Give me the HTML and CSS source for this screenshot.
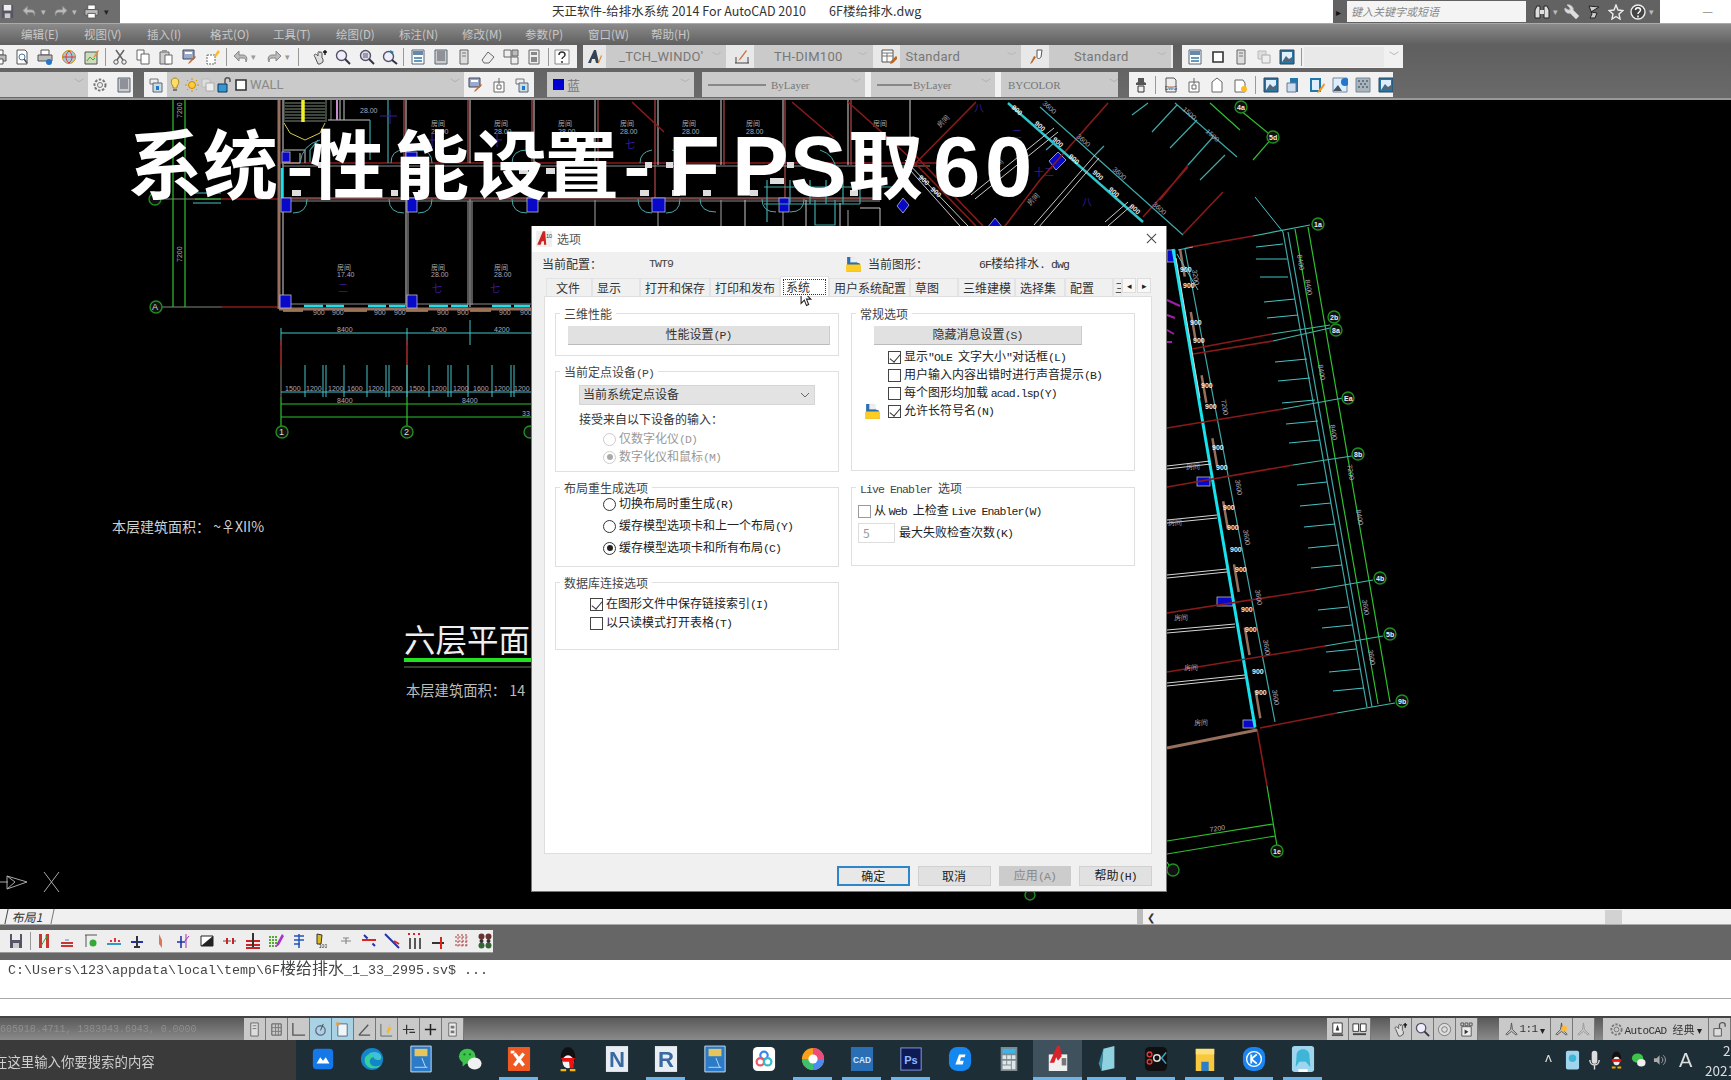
FILE: index.html
```html
<!DOCTYPE html>
<html lang="zh">
<head>
<meta charset="utf-8">
<title>天正软件-给排水系统 2014 For AutoCAD 2010</title>
<link rel="stylesheet" href="styles.css">
</head>
<body>
<svg class="defs" width="0" height="0">
  <defs>
    <symbol id="doc" viewBox="0 0 16 16"><path d="M3 1h7l3 3v11H3z" fill="#fff" stroke="#555"/><path d="M5 6h6M5 9h6M5 12h4" stroke="#88a"/></symbol>
    <symbol id="save" viewBox="0 0 16 16"><path d="M2 1h12v14H2z" fill="#556"/><path d="M4 1h8v6H4z" fill="#eee"/><path d="M5 10h6v5H5z" fill="#ccc"/></symbol>
    <symbol id="print" viewBox="0 0 16 16"><path d="M4 1h8v5H4z" fill="#fff" stroke="#555"/><path d="M1 6h14v6H1z" fill="#bbb" stroke="#555"/><path d="M4 10h8v5H4z" fill="#fff" stroke="#555"/></symbol>
    <symbol id="prev" viewBox="0 0 16 16"><path d="M3 1h8l2 2v12H3z" fill="#fff" stroke="#555"/><circle cx="8" cy="8" r="3" fill="none" stroke="#47a"/><path d="M10 10l3 4" stroke="#555" stroke-width="1.5"/></symbol>
    <symbol id="plot" viewBox="0 0 16 16"><path d="M4 1h8v5H4z" fill="#fff" stroke="#555"/><path d="M1 6h14v6H1z" fill="#bbb" stroke="#555"/><circle cx="12" cy="13" r="3" fill="#27c"/></symbol>
    <symbol id="globe" viewBox="0 0 16 16"><circle cx="8" cy="8" r="6.5" fill="#9cd" stroke="#c80"/><path d="M2 8h12M8 2c-4 3-4 9 0 12M8 2c4 3 4 9 0 12" fill="none" stroke="#e33"/></symbol>
    <symbol id="pub" viewBox="0 0 16 16"><path d="M1 3h12v12H1z" fill="#cdb" stroke="#555"/><path d="M3 12l3-4 3 3 2-2" fill="none" stroke="#3a3"/><path d="M14 1l-4 6-1 2 2-1 4-6z" fill="#e83"/></symbol>
    <symbol id="cut" viewBox="0 0 16 16"><path d="M4 1l7 10M12 1L5 11" stroke="#666" stroke-width="1.5"/><circle cx="4" cy="13" r="2.2" fill="none" stroke="#555"/><circle cx="12" cy="13" r="2.2" fill="none" stroke="#555"/></symbol>
    <symbol id="copy" viewBox="0 0 16 16"><path d="M2 1h7v10H2z" fill="#fff" stroke="#666"/><path d="M6 5h8v10H6z" fill="#fff" stroke="#666"/></symbol>
    <symbol id="paste" viewBox="0 0 16 16"><path d="M2 3h9v12H2z" fill="#ccc" stroke="#666"/><path d="M7 6h7v9H7z" fill="#fff" stroke="#666"/><path d="M4 1h5v3H4z" fill="#999"/></symbol>
    <symbol id="block" viewBox="0 0 16 16"><path d="M1 1h11v9H1z" fill="#9ac" stroke="#445"/><path d="M3 3h7v2H3z" fill="#fff"/><path d="M13 7l-6 6-1 2 2-1 6-6z" fill="#c62"/></symbol>
    <symbol id="match" viewBox="0 0 16 16"><path d="M2 6h8v9H2z" fill="#fff" stroke="#666" stroke-dasharray="2 1"/><path d="M13 1l-4 6 2 1 4-5z" fill="#fb2"/></symbol>
    <symbol id="undo" viewBox="0 0 16 16"><path d="M6 2L1 7l5 5V9h4c2 0 3 1 3 4 2-4 0-7-3-7H6z" fill="#bbb" stroke="#888"/></symbol>
    <symbol id="redo" viewBox="0 0 16 16"><path d="M10 2l5 5-5 5V9H6c-2 0-3 1-3 4-2-4 0-7 3-7h4z" fill="#bbb" stroke="#888"/></symbol>
    <symbol id="pan" viewBox="0 0 16 16"><path d="M3 8c-2-2 0-4 2-2l1 1V4c0-2 2-2 2 0 0-2 2-1 2 0v5l1 1 0 3-3 2H6z" fill="#ddd" stroke="#555"/><path d="M13 1v5M11 3h4" stroke="#111" stroke-width="1.4"/></symbol>
    <symbol id="zoom" viewBox="0 0 16 16"><circle cx="6.5" cy="6.5" r="5" fill="#eef" stroke="#556" stroke-width="1.4"/><path d="M10 10l5 5" stroke="#334" stroke-width="2"/></symbol>
    <symbol id="zoom2" viewBox="0 0 16 16"><circle cx="6.5" cy="6.5" r="5" fill="#dde" stroke="#556" stroke-width="1.4"/><path d="M4 4h5v5H4z" fill="#99a"/><path d="M10 10l5 5" stroke="#334" stroke-width="2"/></symbol>
    <symbol id="zoom3" viewBox="0 0 16 16"><circle cx="6.5" cy="7.5" r="5" fill="#eef" stroke="#556" stroke-width="1.4"/><path d="M10 11l5 4" stroke="#334" stroke-width="2"/><path d="M8 1l4 2-3 2" fill="#27a"/></symbol>
    <symbol id="panel" viewBox="0 0 16 16"><path d="M2 1h12v14H2z" fill="#fff" stroke="#567"/><path d="M3 2h10v4H3z" fill="#68a"/><path d="M4 9h8M4 12h8" stroke="#69b" stroke-width="2"/></symbol>
    <symbol id="panel2" viewBox="0 0 16 16"><path d="M2 1h12v14H2z" fill="#ccc" stroke="#567"/><path d="M4 3h8M4 5h8M4 7h8M4 9h8M4 11h8" stroke="#556"/></symbol>
    <symbol id="panel3" viewBox="0 0 16 16"><path d="M4 1h8v14H4z" fill="#ddd" stroke="#666"/><path d="M6 4h4M6 7h4" stroke="#777"/></symbol>
    <symbol id="erase" viewBox="0 0 16 16"><path d="M2 11l6-8 6 5-5 6H4z" fill="#eee" stroke="#666"/></symbol>
    <symbol id="sheet" viewBox="0 0 16 16"><path d="M1 1h7v7H1zM8 8h7v7H8z" fill="#eee" stroke="#666"/><path d="M9 1h6v6H9z" fill="#bbb" stroke="#666"/></symbol>
    <symbol id="calc" viewBox="0 0 16 16"><path d="M3 1h10v14H3z" fill="#eee" stroke="#666"/><path d="M5 3h6v3H5zM5 8h6v5H5z" fill="#888"/></symbol>
    <symbol id="help" viewBox="0 0 16 16"><path d="M1 1h14v14H1z" fill="#fff" stroke="#888"/><path d="M5 6c0-4 6-4 6 0 0 2-3 2-3 4M8 12v2" fill="none" stroke="#333" stroke-width="1.5"/></symbol>
    <symbol id="txt" viewBox="0 0 16 16"><path d="M1 14L7 1h2l3 13h-3l-1-4H5l-1 4z" fill="#345"/><path d="M14 6l-3 8-1 1 2-1 3-7z" fill="#e83"/></symbol>
    <symbol id="dim" viewBox="0 0 16 16"><path d="M1 14h14M2 8v6M14 8v6" stroke="#444" fill="none"/><path d="M12 1L6 9l-2 3 3-2 6-8z" fill="#c74"/></symbol>
    <symbol id="tbl" viewBox="0 0 16 16"><path d="M1 1h11v12H1z" fill="#fff" stroke="#555"/><path d="M1 4h11M1 7h11M6 4v9" stroke="#777"/><path d="M15 7l-5 5-1 3 3-1 5-5z" fill="#b62"/></symbol>
    <symbol id="mls" viewBox="0 0 16 16"><path d="M8 1h5l-1 7c-1 2-4 2-4 0z" fill="#fff" stroke="#555"/><path d="M7 8L3 14l-2 1 1-2 3-6z" fill="#b62"/></symbol>
    <symbol id="gear" viewBox="0 0 16 16"><circle cx="8" cy="8" r="5.5" fill="none" stroke="#777" stroke-width="2" stroke-dasharray="2.5 1.5"/><circle cx="8" cy="8" r="2.5" fill="none" stroke="#777"/></symbol>
    <symbol id="layer" viewBox="0 0 16 16"><path d="M2 2h8v5H2z" fill="#eee" stroke="#777"/><path d="M5 6h9v9H5z" fill="#cdd" stroke="#567"/><path d="M8 9h3v4H8z" fill="#27c"/></symbol>
    <symbol id="bulb" viewBox="0 0 16 16"><path d="M8 1c4 0 5 5 2 8v2H6V9C3 6 4 1 8 1z" fill="#fd6" stroke="#a82"/><path d="M6 13h4" stroke="#777" stroke-width="2"/></symbol>
    <symbol id="sun" viewBox="0 0 16 16"><circle cx="8" cy="8" r="3.5" fill="#fc3" stroke="#c80"/><path d="M8 1v2M8 13v2M1 8h2M13 8h2M3 3l1 1M12 12l1 1M3 13l1-1M12 4l1-1" stroke="#c90"/></symbol>
    <symbol id="faint" viewBox="0 0 16 16"><path d="M2 2h8v8H2z" fill="#ddd" stroke="#bbb"/><path d="M6 6h8v8H6z" fill="#eee" stroke="#aaa"/></symbol>
    <symbol id="lock" viewBox="0 0 16 16"><path d="M2 7h9v8H2z" fill="#39c" stroke="#136"/><path d="M9 7V3c0-3 5-3 5 0v2" fill="none" stroke="#555" stroke-width="1.5"/></symbol>
    <symbol id="bsq" viewBox="0 0 16 16"><path d="M3 3h10v10H3z" fill="#fff" stroke="#333" stroke-width="1.6"/></symbol>
    <symbol id="img" viewBox="0 0 16 16"><path d="M1 1h14v14H1z" fill="#27a" stroke="#345"/><path d="M3 3h10v10H3z" fill="#def"/><path d="M3 13l4-6 3 3 3-2v5z" fill="#567"/></symbol>
    <symbol id="img2" viewBox="0 0 16 16"><path d="M4 1h8v14H4z" fill="#27a"/><path d="M1 6h9v9H1z" fill="#cde" stroke="#679"/></symbol>
    <symbol id="img3" viewBox="0 0 16 16"><path d="M1 1h11v14H1z" fill="#27a"/><path d="M3 3h7v10H3z" fill="#def"/><path d="M15 6l-6 8-1 2 3-1 5-7z" fill="#e92"/></symbol>
    <symbol id="img4" viewBox="0 0 16 16"><path d="M1 1h14v14H1z" fill="#def" stroke="#789"/><circle cx="13" cy="5" r="4" fill="#27c"/><path d="M1 14l5-6 4 6z" fill="#456"/></symbol>
    <symbol id="img5" viewBox="0 0 16 16"><path d="M1 1h14v14H1z" fill="#a9b4bb" stroke="#789"/><path d="M3 3h2v2H3zM7 3h2v2H7zM11 3h2v2h-2zM5 6h2v2H5zM9 6h2v2H9zM3 9h2v2H3zM7 9h2v2H7zM11 9h2v2h-2z" fill="#678"/></symbol>
    <symbol id="att" viewBox="0 0 16 16"><path d="M5 1h6v4l2 1v2H3V6l2-1z" fill="#555"/><path d="M5 9h6v6H5z" fill="#eee" stroke="#333"/></symbol>
    <symbol id="dwg" viewBox="0 0 16 16"><path d="M3 1h8l2 2v12H3z" fill="#eee" stroke="#555"/><text x="8" y="13" class="svg-tiny">DWG</text></symbol>
    <symbol id="dgn" viewBox="0 0 16 16"><path d="M3 5h10v10H3z" fill="#fff" stroke="#666"/><path d="M6 8h4v4H6zM8 1v6" fill="none" stroke="#666"/></symbol>
    <symbol id="dgn2" viewBox="0 0 16 16"><path d="M3 5l5-4 5 4v10H3z" fill="#fff" stroke="#666"/></symbol>
    <symbol id="dgn3" viewBox="0 0 16 16"><path d="M3 3h8l2 3v9H3z" fill="#fff" stroke="#666"/><circle cx="12" cy="12" r="3" fill="#fb2"/></symbol>
    <symbol id="bino" viewBox="0 0 16 16"><path d="M1 14V6l2-4h3v12zM15 14V6l-2-4h-3v12z" fill="#ddd" stroke="#222"/><path d="M6 6h4v4H6z" fill="#ddd"/></symbol>
    <symbol id="wrench" viewBox="0 0 16 16"><path d="M3 1l3 3v2H4L1 4c-1 4 3 6 5 5l6 6 3-3-6-6c1-2-2-6-6-5z" fill="#ddd" stroke="#bbb"/></symbol>
    <symbol id="sat" viewBox="0 0 16 16"><path d="M3 2l10 1-8 5 6 1-2 5H4l2-4z" fill="#ccc" stroke="#222"/></symbol>
    <symbol id="star" viewBox="0 0 16 16"><path d="M8 1l2 5 5 .5-4 3.500 1 5-4-2.500-4 2.500 1-5-4-3.500 5-.5z" fill="none" stroke="#eee" stroke-width="1.4"/></symbol>
    <symbol id="qm" viewBox="0 0 16 16"><circle cx="8" cy="8" r="7" fill="#444" stroke="#eee" stroke-width="1.4"/><path d="M5.500 6c0-3 5-3 5 0 0 2-2.500 2-2.500 4M8 11.500v2" fill="none" stroke="#fff" stroke-width="1.5"/></symbol>
    <symbol id="cad" viewBox="0 0 16 16"><path d="M1 1h14v14H1z" fill="#eee"/><path d="M2 13L7 1h2l1 12H8V10H6l-1 3z" fill="#c22"/><text x="12.500" y="7" class="svg-tiny">10</text></symbol>
    <symbol id="dwgicon" viewBox="0 0 16 16"><path d="M2 1h7l2 5 3 1 1 8H2z" fill="#2a6fb0"/><path d="M1 8h14v7H1z" fill="#fc2"/><path d="M5 1h6v5H5z" fill="#eee"/></symbol>
    <symbol id="stat" viewBox="0 0 16 16"><path d="M3 2h10v12H3z" fill="none" stroke="#555"/><path d="M3 6h10M3 10h10M7 2v12M10 2v12" stroke="#777"/></symbol>
    <symbol id="rule" viewBox="0 0 16 16"><path d="M2 1v13h13" fill="none" stroke="#555" stroke-width="1.4"/></symbol>
    <symbol id="angle" viewBox="0 0 16 16"><path d="M2 14h12M2 14L12 3" fill="none" stroke="#555" stroke-width="1.4"/></symbol>
    <symbol id="cross" viewBox="0 0 16 16"><path d="M8 2v12M2 8h12" stroke="#222" stroke-width="1.6"/></symbol>
    <symbol id="tcur" viewBox="0 0 16 16"><path d="M6 3v10M2 8h12M9 11h6" stroke="#333" stroke-width="1.3"/></symbol>
    <symbol id="qp" viewBox="0 0 16 16"><path d="M4 1h8v14H4z" fill="#eee" stroke="#666"/><path d="M6 4h4v3H6zM6 9h4v3H6z" fill="#777"/></symbol>
    <symbol id="poly" viewBox="0 0 16 16"><circle cx="8" cy="9" r="5" fill="none" stroke="#668" stroke-width="1.4"/><path d="M8 9l3-7" stroke="#444"/></symbol>
    <symbol id="obj" viewBox="0 0 16 16"><path d="M3 2h10v13H3z" fill="#eef6fb" stroke="#567"/><circle cx="3" cy="2" r="2" fill="#e94"/></symbol>
    <symbol id="pol" viewBox="0 0 16 16"><path d="M2 2v13h12" fill="none" stroke="#566"/><path d="M8 10l4-9-1 5 3 0-5 7z" fill="#eb3"/></symbol>
    <symbol id="model" viewBox="0 0 16 16"><path d="M3 1h10v11H3z" fill="#fff" stroke="#333"/><path d="M2 14h12" stroke="#555" stroke-width="2"/><path d="M6 9l2-6 2 6z" fill="#333"/></symbol>
    <symbol id="lay2" viewBox="0 0 16 16"><path d="M1 2h6v8H1zM9 2h6v8H9z" fill="#fff" stroke="#333"/><path d="M1 13h14" stroke="#444" stroke-width="2"/></symbol>
    <symbol id="anno" viewBox="0 0 16 16"><path d="M8 1l1 7 5 5-1 1-5-4-5 4-1-1 5-5z" fill="none" stroke="#555"/></symbol>
    <symbol id="anno2" viewBox="0 0 16 16"><path d="M8 1l1 7 5 5-1 1-5-4-5 4-1-1 5-5z" fill="none" stroke="#555"/><circle cx="11" cy="7" r="3" fill="#fb3"/></symbol>
    <symbol id="anno3" viewBox="0 0 16 16"><path d="M8 1l1 7 5 5-1 1-5-4-5 4-1-1 5-5z" fill="none" stroke="#999"/></symbol>
    <symbol id="navw" viewBox="0 0 16 16"><circle cx="8" cy="8" r="6.5" fill="#ddd" stroke="#777"/><circle cx="8" cy="8" r="3" fill="none" stroke="#777"/></symbol>
    <symbol id="film" viewBox="0 0 16 16"><path d="M3 5h10v10H3z" fill="#eee" stroke="#555"/><path d="M6 8l4 2.500L6 13z" fill="#333"/><path d="M2 1h3v3H2zM6.500 1h3v3h-3zM11 1h3v3h-3z" fill="none" stroke="#555"/></symbol>
    <symbol id="unl" viewBox="0 0 16 16"><path d="M2 7h8v8H2z" fill="#ddd" stroke="#555"/><path d="M8 7V3c0-3 6-3 6 0v2" fill="none" stroke="#555" stroke-width="1.4"/></symbol>
    <symbol id="t1" viewBox="0 0 16 16"><path d="M3 1h3v14H3zM10 1h3v14h-3z" fill="#c33"/><path d="M5 13L11 3M9 3h2v3" stroke="#2a2" fill="none"/></symbol>
    <symbol id="t2" viewBox="0 0 16 16"><path d="M2 10h12M2 13h12" stroke="#c33" stroke-width="2"/><path d="M6 7h4" stroke="#39c"/></symbol>
    <symbol id="t3" viewBox="0 0 16 16"><path d="M2 2h12M3 2v12" stroke="#555" fill="none"/><circle cx="10" cy="10" r="3.500" fill="#3a3"/></symbol>
    <symbol id="t4" viewBox="0 0 16 16"><path d="M1 11h14" stroke="#39c" stroke-width="2"/><path d="M4 7h2v2H4zM8 5h2v4H8zM12 7h2v2h-2z" fill="#d33"/></symbol>
    <symbol id="t5" viewBox="0 0 16 16"><path d="M2 9h12" stroke="#23a" stroke-width="2"/><path d="M8 3v10M5 14h6" stroke="#333" stroke-width="2"/></symbol>
    <symbol id="t6" viewBox="0 0 16 16"><path d="M7 1v10l3 4V7z" fill="#d75"/></symbol>
    <symbol id="t7" viewBox="0 0 16 16"><path d="M2 9h8M6 3v12" stroke="#23a" stroke-width="1.600"/><path d="M11 1v14M9 9l5-6" stroke="#a3a"/></symbol>
    <symbol id="t8" viewBox="0 0 16 16"><path d="M2 3h12v10H2z" fill="#fff" stroke="#222"/><path d="M2 13L14 3v10z" fill="#222"/></symbol>
    <symbol id="t9" viewBox="0 0 16 16"><path d="M1 8h14" stroke="#555" stroke-dasharray="3 2"/><path d="M4 5h2v6H4zM10 5h2v6h-2z" fill="#c22"/></symbol>
    <symbol id="t10" viewBox="0 0 16 16"><path d="M1 8h14M1 12h14M1 15h14" stroke="#c22" stroke-width="2"/><path d="M8 0v14" stroke="#333" stroke-width="2"/></symbol>
    <symbol id="t11" viewBox="0 0 16 16"><path d="M2 3v12M5 3v12M8 3v12" stroke="#5a3" stroke-width="2" stroke-dasharray="2 1"/><path d="M14 1L9 10l-1 4 3-2 5-9z" fill="#a3c"/></symbol>
    <symbol id="t12" viewBox="0 0 16 16"><path d="M3 3h10M3 7h10M3 11h6M8 1v14" stroke="#25b" stroke-width="1.500"/></symbol>
    <symbol id="t13" viewBox="0 0 16 16"><path d="M3 1l5 1-1 9H3z" fill="#db2" stroke="#333"/><text x="9" y="15" class="svg-tiny">100</text></symbol>
    <symbol id="t14" viewBox="0 0 16 16"><path d="M3 8h10M5 5h6M8 5v6" stroke="#888" stroke-width="1.200"/></symbol>
    <symbol id="t15" viewBox="0 0 16 16"><path d="M1 7h14" stroke="#d22" stroke-width="2"/><path d="M3 2l11 11" stroke="#23a" stroke-width="2" stroke-dasharray="5 7"/></symbol>
    <symbol id="t16" viewBox="0 0 16 16"><path d="M1 1l14 14" stroke="#23a" stroke-width="2"/><path d="M10 8l5 3" stroke="#d22" stroke-width="2"/></symbol>
    <symbol id="t17" viewBox="0 0 16 16"><path d="M3 5v11M8 5v11M13 5v11" stroke="#333" stroke-width="1.600"/><path d="M1 1h14" stroke="#d22" stroke-width="2" stroke-dasharray="2 3"/></symbol>
    <symbol id="t18" viewBox="0 0 16 16"><path d="M2 10h12" stroke="#333" stroke-width="2"/><path d="M11 4v12" stroke="#d22" stroke-width="2"/></symbol>
    <symbol id="t19" viewBox="0 0 16 16"><path d="M1 4h14M1 8h14M1 12h14M4 1v14M8 1v14M12 1v14" stroke="#a33" stroke-dasharray="2 1.500"/></symbol>
    <symbol id="t20" viewBox="0 0 16 16"><circle cx="4.500" cy="3.500" r="3" fill="#633"/><circle cx="11.500" cy="3.500" r="3" fill="#633"/><circle cx="4.500" cy="12.500" r="3" fill="#363"/><circle cx="11.500" cy="12.500" r="3" fill="#363"/><circle cx="4.500" cy="8" r="2" fill="#333"/><circle cx="11.500" cy="8" r="2" fill="#333"/></symbol>
  </defs>
</svg>

<div class="app">
  <header class="titlebar">
    <div class="qat">
      <svg class="ic"><use href="#save"/></svg>
      <svg class="ic"><use href="#undo"/></svg><i class="dot">▾</i>
      <svg class="ic"><use href="#redo"/></svg><i class="dot">▾</i>
      <svg class="ic"><use href="#print"/></svg><i class="dot dark">▾</i>
    </div>
    <div class="apptitle"><span>天正软件-给排水系统 2014 For AutoCAD 2010</span><span>6F楼给排水.dwg</span></div>
    <div class="search">
      <i class="tri">▸</i>
      <div class="searchbox">键入关键字或短语</div>
      <svg class="ic"><use href="#bino"/></svg><i class="dot">▾</i>
      <svg class="ic"><use href="#wrench"/></svg>
      <svg class="ic"><use href="#sat"/></svg>
      <svg class="ic"><use href="#star"/></svg>
      <svg class="ic"><use href="#qm"/></svg><i class="dot">▾</i>
    </div>
    <div class="minbtn">—</div>
  </header>

  <nav class="menubar">
    <span>编辑(E)</span><span>视图(V)</span><span>插入(I)</span><span>格式(O)</span><span>工具(T)</span><span>绘图(D)</span><span>标注(N)</span><span>修改(M)</span><span>参数(P)</span><span>窗口(W)</span><span>帮助(H)</span>
  </nav>

  <div class="toolzone">
    <div class="toolrow one">
      <div class="tb tb-a">
        <svg class="ic"><use href="#print"/></svg><svg class="ic"><use href="#prev"/></svg><svg class="ic"><use href="#plot"/></svg><svg class="ic"><use href="#globe"/></svg><svg class="ic"><use href="#pub"/></svg><b class="sep"></b>
        <svg class="ic"><use href="#cut"/></svg><svg class="ic"><use href="#copy"/></svg><svg class="ic"><use href="#paste"/></svg><svg class="ic"><use href="#block"/></svg><svg class="ic"><use href="#match"/></svg><b class="sep"></b>
        <svg class="ic"><use href="#undo"/></svg><i class="dot g">▾</i><svg class="ic"><use href="#redo"/></svg><i class="dot g">▾</i><b class="sep wide"></b>
        <svg class="ic"><use href="#pan"/></svg><svg class="ic"><use href="#zoom"/></svg><svg class="ic"><use href="#zoom2"/></svg><svg class="ic"><use href="#zoom3"/></svg><b class="sep"></b>
        <svg class="ic"><use href="#panel"/></svg><svg class="ic"><use href="#panel2"/></svg><svg class="ic"><use href="#panel3"/></svg><svg class="ic"><use href="#erase"/></svg><svg class="ic"><use href="#sheet"/></svg><svg class="ic"><use href="#calc"/></svg><b class="sep"></b>
        <svg class="ic"><use href="#help"/></svg>
      </div>
      <div class="tb tb-b">
        <svg class="ic"><use href="#txt"/></svg>
        <div class="dd w120 sans">_TCH_WINDO'<em>﹀</em></div>
        <svg class="ic ml"><use href="#dim"/></svg>
        <div class="dd w119 sans">TH-DIM100<em>﹀</em></div>
        <svg class="ic ml"><use href="#tbl"/></svg>
        <div class="dd w121 sansl">Standard<em>﹀</em></div>
        <svg class="ic ml"><use href="#mls"/></svg>
        <div class="dd w122 sansr">Standard<em>﹀</em></div>
      </div>
      <div class="tb tb-c">
        <svg class="ic"><use href="#panel"/></svg><svg class="ic"><use href="#bsq"/></svg><svg class="ic"><use href="#panel3"/></svg><svg class="ic"><use href="#faint"/></svg><svg class="ic"><use href="#img"/></svg><b class="sep"></b>
        <div class="dd blank"><em>﹀</em></div>
      </div>
    </div>
    <div class="toolrow two">
      <div class="tb tb-d">
        <div class="dd w88"><em>﹀</em></div>
        <svg class="ic"><use href="#gear"/></svg><svg class="ic"><use href="#panel2"/></svg>
      </div>
      <div class="tb tb-e">
        <svg class="ic"><use href="#layer"/></svg>
        <div class="dd w297 layerdd">
          <svg class="ic s"><use href="#bulb"/></svg><svg class="ic s"><use href="#sun"/></svg><svg class="ic s"><use href="#faint"/></svg><svg class="ic s"><use href="#lock"/></svg><svg class="ic s"><use href="#bsq"/></svg><span class="wall">WALL</span><em>﹀</em>
        </div>
        <svg class="ic"><use href="#block"/></svg><svg class="ic"><use href="#dgn"/></svg><svg class="ic"><use href="#layer"/></svg>
      </div>
      <div class="tb tb-f">
        <div class="dd w147"><b class="bluesq"></b><span>蓝</span><em>﹀</em></div>
      </div>
      <div class="tb tb-g">
        <div class="dd w163"><b class="ln"></b><span class="serif">ByLayer</span><em>﹀</em></div>
        <div class="dd w124"><b class="ln short"></b><span class="serif">ByLayer</span><em>﹀</em></div>
        <div class="dd w122"><span class="serif by">BYCOLOR</span><em>﹀</em></div>
      </div>
      <div class="tb tb-h">
        <svg class="ic"><use href="#att"/></svg><b class="sep"></b>
        <svg class="ic"><use href="#dwg"/></svg><svg class="ic"><use href="#dgn"/></svg><svg class="ic"><use href="#dgn2"/></svg><svg class="ic"><use href="#dgn3"/></svg><b class="sep"></b>
        <svg class="ic"><use href="#img"/></svg><svg class="ic"><use href="#img2"/></svg><svg class="ic"><use href="#img3"/></svg><svg class="ic"><use href="#img4"/></svg><svg class="ic"><use href="#img5"/></svg><svg class="ic"><use href="#img"/></svg>
      </div>
    </div>
  </div>

  <main class="canvas">
    <svg class="drawing" viewBox="0 100 1731 809">
      <!-- grid lines west -->
      <g class="gy"><path d="M162 199H221M162 307H222M281 340V397M407 340V397"/></g>
      <g class="cy"><path d="M193 193H221M193 203H221M281 333H531M281 328V345M407 328V345M470 320V345M281 392H531"/></g>
      <g class="gn"><path d="M173 100V307M185 100V307M281 404H531M281 417H531M281 397V426M407 397V426M195 199H221"/></g>
      <g class="rd2"><path d="M221 199H279M221 307H279M281 340V365M407 340V365M279 163H940"/></g>
      <g class="cir">
        <circle cx="155" cy="199" r="6"/><circle cx="156" cy="307" r="6"/><circle cx="282" cy="432" r="6"/><circle cx="407" cy="432" r="6"/><circle cx="530" cy="432" r="6"/>
      </g>
      <g class="tx8"><text x="152" y="310">A</text><text x="279" y="435">1</text><text x="404" y="435">2</text></g>

      <!-- plan walls -->
      <path class="brown" d="M279 100V309M279 309H531"/>
      <g class="wh"><path d="M283 100V307M406 100V163M406 199V307M470 199V307M470 100V163M534 100V163M595 100V165M658 100V165M721 100V165M783 100V165M848 100V165M910 100V170"/></g>
      <g class="rd"><path d="M404 100V163M468 100V163M532 100V163M598 100V165M655 100V200M724 100V165M785 100V200M851 100V165"/></g>
      <g class="gy2"><path d="M283 166H930M283 198H880M283 201H880M283 304H531M468 201V305M472 201V305M408 201V305M595 200V226M658 200V226M721 200V226M783 200V226M848 210V226"/></g>
      <g class="rd"><path d="M283 199H880"/></g>
      <g class="cyt"><path d="M304 306H323M326 306H344M368 306H386M389 306H405M429 306H448M451 306H468M492 306H511M514 306H530M282 168V198"/></g>
      <g class="or"><path d="M283 311H303M344 311H367M406 311H428M470 311H491"/></g>

      <!-- stairs -->
      <g class="gy"><path d="M285 103H325M285 106H325M285 109H325M285 112H325M285 115H325M285 118H325M285 121H325M284 100V122M326 100V122M331 100V120"/></g>
      <path class="yb" d="M303 100V122"/>
      <path class="yl" d="M284 123L290 133L305 140L320 133L325 123"/>
      <g class="wt"><path d="M328 120H370M344 100V120M340 100V120M284 150H305V163M300 153V163H284"/></g>
      <path class="cyd" d="M388 100V163M370 120V160M310 150L318 140M310 150V162"/>
      <path class="mg" d="M337 100V120"/>

      <!-- door arcs -->
      <g class="arc"><path d="M293 213Q307 213 307 199M389 199Q389 213 404 213M418 213Q432 213 432 199M512 199Q512 213 527 213M391 163Q391 150 404 150M418 150Q432 150 432 163M512 163Q512 150 527 150M638 199Q638 213 652 213M666 213Q680 213 680 199M700 199Q700 212 716 212M762 199Q762 212 776 212M790 212Q804 212 804 199M640 163Q640 152 652 150M672 150Q682 152 684 163M300 163Q302 145 320 140M820 150Q835 155 836 170"/></g>

      <!-- columns -->
      <g class="col">
        <rect x="280" y="295" width="11" height="13"/><rect x="407" y="295" width="10" height="13"/><rect x="281" y="198" width="10" height="14"/><rect x="407" y="198" width="10" height="14"/><rect x="527" y="198" width="11" height="14"/>
        <rect x="652" y="198" width="13" height="14"/><rect x="779" y="198" width="10" height="14"/><rect x="776" y="152" width="9" height="11"/><rect x="406" y="152" width="11" height="8"/><rect x="282" y="152" width="8" height="10"/>
        <rect x="1197" y="477" width="13" height="9"/><rect x="1217" y="597" width="16" height="9"/><rect x="1243" y="720" width="12" height="8"/><rect x="1167" y="250" width="8" height="12"/>
        <path d="M1058 152L1066 160L1056 170L1049 161ZM995 218L1003 228L987 228ZM903 198L909 205L903 213L897 206Z"/>
      </g>

      <!-- windows / dims under plan -->
      <g class="cy"><path d="M305 365V397M323 365V397M326 365V397M344 365V397M367 365V397M386 365V397M389 365V397M407 365V397M429 365V397M448 365V397M451 365V397M468 365V397M492 365V397M511 365V397M514 365V397"/></g>
      <g class="tx7">
        <text x="313" y="315">900</text><text x="332" y="315">900</text><text x="374" y="315">900</text><text x="394" y="315">900</text><text x="437" y="315">900</text><text x="457" y="315">900</text><text x="499" y="315">900</text><text x="520" y="315">900</text>
        <text x="337" y="332">8400</text><text x="431" y="332">4200</text><text x="494" y="332">4200</text>
        <text x="285" y="391">1500</text><text x="306" y="391">1200</text><text x="328" y="391">1200</text><text x="347" y="391">1600</text><text x="368" y="391">1200</text><text x="391" y="391">200</text><text x="409" y="391">1500</text><text x="431" y="391">1200</text><text x="453" y="391">1200</text><text x="473" y="391">1600</text><text x="494" y="391">1200</text><text x="514" y="391">1200</text>
        <text x="337" y="403">8400</text><text x="462" y="403">8400</text><text x="522" y="416">33</text>
        <text class="rot" transform="rotate(-90 182 118)" x="182" y="118">7200</text><text class="rot" transform="rotate(-90 182 262)" x="182" y="262">7200</text>
      </g>

      <!-- room labels -->
      <g class="room">
        <text x="337" y="270">房间</text><text x="431" y="270">房间</text><text x="494" y="270">房间</text>
        <text x="431" y="126">房间</text><text x="494" y="126">房间</text><text x="558" y="126">房间</text><text x="620" y="126">房间</text><text x="682" y="126">房间</text><text x="746" y="126">房间</text><text x="873" y="126">房间</text>
      </g>
      <g class="tx7">
        <text x="337" y="277">17.40</text><text x="431" y="277">28.00</text><text x="494" y="277">28.00</text>
        <text x="360" y="113">28.00</text><text x="431" y="134">28.00</text><text x="494" y="134">28.00</text><text x="558" y="134">28.00</text><text x="620" y="134">28.00</text><text x="682" y="134">28.00</text><text x="746" y="134">28.00</text>
      </g>
      <g class="pur">
        <text x="338" y="292">二</text><text x="432" y="292">七</text><text x="490" y="292">七</text><text x="625" y="148">七</text><text x="1034" y="176">十二</text><text x="1082" y="206">八</text><text x="974" y="112">八</text><text x="1012" y="138">二</text>
      </g>
      <path class="purl" d="M380 116H397M390 110V124M425 140H438M432 133V147M490 140H502M497 133V147"/>

      <!-- south-east wing, wall -->
      <path class="cyw" d="M1173 249L1255 727"/>
      <path class="brownd" d="M1180 249L1262 728"/>
      <path class="wh" d="M1176 258L1200 398"/>
      <g class="cyd"><path d="M1185 249L1275 722M1283 232L1367 707M1288 232L1372 707"/></g>
      <g class="gn"><path d="M1295 229L1378 704M1308 227L1390 702M1240 110L1273 137M1253 160L1273 137M1210 103L1240 130M1277 846L1267 786M1167 841L1273 824M1167 854L1275 836M1172 870L1167 862"/></g>
      <g class="rd2"><path d="M1185 248L1253 236M1192 349L1272 334M1193 354L1273 341M1167 428L1283 409M1167 487L1293 465M1167 613L1315 590M1167 672L1325 646M1260 728L1337 713M1257 729L1267 786M1188 165L1160 200M1223 192L1183 234M1108 103L1040 180M1143 217L1188 167"/></g>
      <g class="cg"><path d="M1253 236L1310 225M1272 334L1330 325M1273 341L1330 328M1283 409L1343 398M1293 465L1352 456M1315 590L1373 580M1325 646L1383 636M1337 713L1395 703"/></g>
      <g class="cy"><path d="M1255 197L1283 232M1256 247L1283 244M1256 259L1287 259M1260 277L1288 277M1264 302L1295 299M1267 318L1298 315M1275 362L1307 359M1278 381L1310 378M1282 403L1315 400M1286 424L1318 421M1289 443L1320 440M1297 485L1327 482M1300 506L1331 503M1304 527L1335 524M1308 548L1338 545M1311 568L1342 565M1318 610L1348 607M1322 628L1352 625M1326 652L1356 649M1329 672L1360 669M1333 691L1364 688M1177 254L1198 290M1178 250L1193 247"/></g>
      <g class="wh"><path d="M1167 466L1210 461M1167 469L1211 464M1167 520L1217 515M1167 523L1217 518M1167 575L1227 569M1167 578L1227 572M1167 630L1235 624M1167 633L1235 627M1167 683L1245 675M1167 686L1245 678"/></g>
      <path class="brown" d="M1167 748L1257 730"/>
      <path class="mgw" d="M1167 300L1180 306M1167 315L1175 318M1167 330L1174 334M1167 342L1172 342"/>
      <g class="tx7w">
        <text x="1180" y="272">900</text><text x="1183" y="288">900</text><text x="1190" y="325">900</text><text x="1193" y="343">900</text><text x="1201" y="388">900</text><text x="1205" y="409">900</text><text x="1212" y="450">900</text><text x="1216" y="470">900</text><text x="1223" y="510">900</text><text x="1227" y="530">900</text><text x="1230" y="552">900</text><text x="1235" y="572">900</text><text x="1241" y="612">900</text><text x="1245" y="632">900</text><text x="1252" y="674">900</text><text x="1255" y="695">900</text>
      </g>
      <g class="tx7">
        <text x="1192" y="270" transform="rotate(80 1192 270)">3200</text><text x="1221" y="400" transform="rotate(80 1221 400)">7200</text><text x="1235" y="480" transform="rotate(80 1235 480)">3600</text><text x="1243" y="530" transform="rotate(80 1243 530)">3600</text><text x="1255" y="590" transform="rotate(80 1255 590)">3600</text><text x="1263" y="640" transform="rotate(80 1263 640)">3600</text><text x="1272" y="690" transform="rotate(80 1272 690)">3600</text>
        <text x="1297" y="255" transform="rotate(80 1297 255)">8400</text><text x="1305" y="280" transform="rotate(80 1305 280)">8400</text><text x="1318" y="365" transform="rotate(80 1318 365)">8400</text><text x="1330" y="425" transform="rotate(80 1330 425)">8400</text><text x="1347" y="465" transform="rotate(80 1347 465)">7200</text><text x="1356" y="510" transform="rotate(80 1356 510)">8400</text><text x="1362" y="600" transform="rotate(80 1362 600)">3600</text><text x="1368" y="650" transform="rotate(80 1368 650)">3600</text>
        <text x="1210" y="832" transform="rotate(-8 1210 832)">7200</text>
        <text x="1186" y="469">房间</text><text x="1168" y="525">房间</text><text x="1174" y="620">房间</text><text x="1184" y="670">房间</text><text x="1194" y="725">房间</text>
      </g>
      <g class="cir">
        <circle cx="1241" cy="107" r="6"/><circle cx="1273" cy="137" r="6"/><circle cx="1318" cy="224" r="6"/><circle cx="1334" cy="317" r="6"/><circle cx="1336" cy="330" r="6"/><circle cx="1348" cy="398" r="6"/><circle cx="1358" cy="454" r="6"/><circle cx="1380" cy="578" r="6"/><circle cx="1390" cy="634" r="6"/><circle cx="1402" cy="701" r="6"/><circle cx="1277" cy="851" r="6"/><circle cx="1173" cy="870" r="6"/><circle cx="1030" cy="895" r="5"/>
      </g>
      <g class="tx7w cl">
        <text x="1237" y="110">4a</text><text x="1269" y="140">5d</text><text x="1314" y="227">1a</text><text x="1330" y="320">2b</text><text x="1332" y="333">8a</text><text x="1344" y="401">Ea</text><text x="1354" y="457">8b</text><text x="1376" y="581">4b</text><text x="1386" y="637">5b</text><text x="1398" y="704">9b</text><text x="1273" y="854">1e</text>
      </g>

      <!-- north-east diagonal wing -->
      <g class="cyt2"><path d="M1008 103L1143 222"/></g>
      <g class="cyd"><path d="M1040 107L1183 235M1175 103L1237 157M1148 103L1132 115M1177 105L1152 132M1197 120L1170 148M1213 137L1188 165M1225 155L1200 180M1055 142L1046 150M1095 155L1104 146"/></g>
      <g class="wt"><path d="M1054 128L971 195M1058 132L975 199M1095 155L1034 225M1099 158L1038 228M1128 202L1105 222M1132 205L1108 226"/></g>
      <g class="rd2"><path d="M976 102L909 170M792 102L834 138M632 102L664 132M848 102L907 155M907 155L976 226M912 152L983 226M1040 180L1005 226"/></g>
      <g class="wt"><path d="M905 160L968 226M910 170L960 226"/></g>
      <g class="tx7w dg">
        <text x="1011" y="108" transform="rotate(42 1011 108)">900</text><text x="1034" y="124" transform="rotate(42 1034 124)">900</text><text x="1052" y="140" transform="rotate(42 1052 140)">900</text><text x="1068" y="157" transform="rotate(42 1068 157)">900</text><text x="1092" y="173" transform="rotate(42 1092 173)">900</text><text x="1108" y="190" transform="rotate(42 1108 190)">900</text><text x="1129" y="207" transform="rotate(42 1129 207)">900</text>
        <text x="918" y="178" transform="rotate(42 918 178)">900</text><text x="930" y="190" transform="rotate(42 930 190)">900</text>
      </g>
      <g class="tx7">
        <text x="1042" y="104" transform="rotate(42 1042 104)">3600</text><text x="1076" y="137" transform="rotate(42 1076 137)">3600</text><text x="1112" y="170" transform="rotate(42 1112 170)">3600</text><text x="1152" y="205" transform="rotate(42 1152 205)">3600</text><text x="1182" y="110" transform="rotate(42 1182 110)">1500</text><text x="1205" y="132" transform="rotate(42 1205 132)">1500</text>
        <text x="940" y="128" transform="rotate(-48 940 128)">房间</text><text x="994" y="172" transform="rotate(-48 994 172)">房间</text><text x="1030" y="206" transform="rotate(-48 1030 206)">房间</text>
      </g>

      <!-- small cluster -->
      <g class="cyd"><path d="M764 187H895M764 204H860M767 180V222M790 180V204M810 180V204M826 180V204M843 180V204M860 180V204M815 200V225H835V200"/></g>
      <g class="wt"><path d="M806 200V226M840 203V226M860 208H880V226M745 200V226"/></g>
      <g class="blob"><rect x="292" y="190" width="9" height="6"/><rect x="318" y="162" width="7" height="6"/><rect x="391" y="190" width="7" height="6"/><rect x="418" y="190" width="7" height="6"/><rect x="519" y="168" width="9" height="6"/><rect x="546" y="168" width="9" height="6"/><rect x="645" y="162" width="7" height="6"/><rect x="666" y="162" width="7" height="6"/><rect x="640" y="190" width="9" height="6"/><rect x="672" y="190" width="8" height="6"/><rect x="703" y="190" width="8" height="6"/><rect x="750" y="190" width="8" height="6"/><rect x="787" y="162" width="7" height="6"/><rect x="770" y="178" width="14" height="6"/><rect x="815" y="190" width="14" height="6"/><rect x="850" y="190" width="8" height="6"/></g>

      <!-- notes -->
      <text class="note" x="112" y="532">本层建筑面积： ~♀XII%</text>
      <text class="head" x="404" y="652">六层平面</text>
      <path class="greenbar" d="M404 660H531"/>
      <path class="thin" d="M404 667H531"/>
      <text class="note dim" x="406" y="696">本层建筑面积：   14</text>
      <g class="ucs"><path d="M0 882H8M7 876L27 882L7 889ZM7 876L15 882L7 889M44 872L59 892M59 872L44 892"/></g>

      <!-- big caption -->
      <text class="caption" y="193"><tspan x="128 203 286 310 394 472 544 623">系统-性能设置-</tspan><tspan class="cap-l" y="196" x="668 732 790">FPS</tspan><tspan x="848" y="193">取</tspan><tspan class="cap-l" y="196" x="933 985">60</tspan></text>
    </svg>

    <section class="dialog">
      <div class="dlg-title">
        <svg class="dlg-icon"><use href="#cad"/></svg><span>选项</span>
        <svg class="dlg-x" viewBox="0 0 12 12"><path d="M1 1l10 10M11 1L1 11"/></svg>
      </div>
      <div class="dlg-info">
        <span class="inf-a">当前配置：</span><span class="la inf-b">TWT9</span>
        <svg class="inf-ic"><use href="#dwgicon"/></svg>
        <span class="inf-c">当前图形：</span><span class="inf-d"><span class="la">6F</span>楼给排水<span class="la">. dwg</span></span>
      </div>
      <div class="tabs">
        <span class="tab w45">文件</span><span class="tab w47">显示</span><span class="tab w69">打开和保存</span><span class="tab w69">打印和发布</span><span class="tab sel"><span class="focus">系统</span></span><span class="tab w80">用户系统配置</span><span class="tab w48">草图</span><span class="tab w58">三维建模</span><span class="tab w49">选择集</span><span class="tab w48">配置</span><span class="tab w8">三</span>
        <span class="scr">◂</span><span class="scr">▸</span>
      </div>
      <div class="panel">
        <div class="col-l">
          <div class="grp h42">
            <span class="lg">三维性能</span>
            <button class="wbtn w262">性能设置<span class="la">(P)</span></button>
          </div>
          <div class="grp h101 p14">
            <span class="lg">当前定点设备<span class="la">(P)</span></span>
            <div class="select">当前系统定点设备<svg class="chev" viewBox="0 0 10 6"><path d="M1 1l4 4 4-4"/></svg></div>
            <div class="lbl">接受来自以下设备的输入：</div>
            <div class="opt off"><i class="radio"></i><span>仅数字化仪<span class="la">(D)</span></span></div>
            <div class="opt off"><i class="radio on"></i><span>数字化仪和鼠标<span class="la">(M)</span></span></div>
          </div>
          <div class="grp h80 p47">
            <span class="lg">布局重生成选项</span>
            <div class="opt"><i class="radio"></i><span>切换布局时重生成<span class="la">(R)</span></span></div>
            <div class="opt"><i class="radio"></i><span>缓存模型选项卡和上一个布局<span class="la">(Y)</span></span></div>
            <div class="opt"><i class="radio on"></i><span>缓存模型选项卡和所有布局<span class="la">(C)</span></span></div>
          </div>
          <div class="grp h66 p34">
            <span class="lg">数据库连接选项</span>
            <div class="chk"><i class="box on"></i><span>在图形文件中保存链接索引<span class="la">(I)</span></span></div>
            <div class="chk"><i class="box"></i><span>以只读模式打开表格<span class="la">(T)</span></span></div>
          </div>
        </div>
        <div class="col-r">
          <div class="grp h158">
            <span class="lg">常规选项</span>
            <button class="wbtn w208">隐藏消息设置<span class="la">(S)</span></button>
            <div class="chks">
              <div class="chk"><i class="box on"></i><span>显示<span class="la">"OLE </span>文字大小<span class="la">"</span>对话框<span class="la">(L)</span></span></div>
              <div class="chk"><i class="box"></i><span>用户输入内容出错时进行声音提示<span class="la">(B)</span></span></div>
              <div class="chk"><i class="box"></i><span>每个图形均加载 <span class="la">acad.lsp(Y)</span></span></div>
              <div class="chk"><i class="box on"></i><span>允许长符号名<span class="la">(N)</span></span><svg class="flag"><use href="#dwgicon"/></svg></div>
            </div>
          </div>
          <div class="grp h79">
            <span class="lg"><span class="la">Live Enabler </span>选项</span>
            <div class="chk live"><i class="box off"></i><span>从 <span class="la">Web </span>上检查 <span class="la">Live Enabler(W)</span></span></div>
            <div class="retry"><span class="num">5</span><span>最大失败检查次数<span class="la">(K)</span></span></div>
          </div>
        </div>
      </div>
      <div class="dlg-foot">
        <button class="fbtn def">确定</button><button class="fbtn">取消</button><button class="fbtn dis">应用<span class="la">(A)</span></button><button class="fbtn">帮助<span class="la">(H)</span></button>
      </div>
    </section>
    <svg class="cursor" viewBox="0 0 12 18"><path d="M1 1v13l3-3 2 5 2-1-2-5h4z"/></svg>
  </main>

  <div class="layoutbar">
    <div class="ltab">布局1</div>
    <div class="hscroll"><span class="arr">❮</span><span class="thumb"></span></div>
  </div>

  <div class="band">
    <div class="tianzheng">
      <svg class="ic"><use href="#save"/></svg><b class="sep"></b>
      <svg class="ic"><use href="#t1"/></svg><svg class="ic"><use href="#t2"/></svg><svg class="ic"><use href="#t3"/></svg><svg class="ic"><use href="#t4"/></svg><svg class="ic"><use href="#t5"/></svg><svg class="ic"><use href="#t6"/></svg><svg class="ic"><use href="#t7"/></svg><svg class="ic"><use href="#t8"/></svg><svg class="ic"><use href="#t9"/></svg><svg class="ic"><use href="#t10"/></svg><svg class="ic"><use href="#t11"/></svg><svg class="ic"><use href="#t12"/></svg><svg class="ic"><use href="#t13"/></svg><svg class="ic"><use href="#t14"/></svg><svg class="ic"><use href="#t15"/></svg><svg class="ic"><use href="#t16"/></svg><svg class="ic"><use href="#t17"/></svg><svg class="ic"><use href="#t18"/></svg><svg class="ic"><use href="#t19"/></svg><svg class="ic"><use href="#t20"/></svg>
    </div>
  </div>

  <div class="command">
    <div class="cmdline"><span class="m">C:\Users\123\appdata\local\temp\6F</span><span class="cj">楼给排水</span><span class="m">_1_33_2995.sv$ ...</span></div>
    <div class="cmdinput"></div>
  </div>

  <footer class="status">
    <span class="coord">605918.4711, 1383943.6943, 0.0000</span>
    <div class="sbtns b1">
      <i><svg class="ic"><use href="#panel3"/></svg></i><i><svg class="ic"><use href="#stat"/></svg></i><i><svg class="ic"><use href="#rule"/></svg></i><i class="on"><svg class="ic"><use href="#poly"/></svg></i><i class="on"><svg class="ic"><use href="#obj"/></svg></i><i><svg class="ic"><use href="#angle"/></svg></i><i><svg class="ic"><use href="#pol"/></svg></i><i><svg class="ic"><use href="#tcur"/></svg></i><i><svg class="ic"><use href="#cross"/></svg></i><i><svg class="ic"><use href="#qp"/></svg></i>
    </div>
    <div class="sbtns b2">
      <i><svg class="ic"><use href="#model"/></svg></i><i><svg class="ic"><use href="#lay2"/></svg></i>
    </div>
    <div class="sbtns b3">
      <i><svg class="ic"><use href="#pan"/></svg></i><i><svg class="ic"><use href="#zoom"/></svg></i><i><svg class="ic"><use href="#navw"/></svg></i><i><svg class="ic"><use href="#film"/></svg></i>
    </div>
    <div class="sbtns b4">
      <i class="wide"><svg class="ic"><use href="#anno"/></svg><span class="la">1:1</span><u>▾</u></i><i><svg class="ic"><use href="#anno2"/></svg></i><i><svg class="ic"><use href="#anno3"/></svg></i>
    </div>
    <div class="sbtns b5">
      <i class="wider"><svg class="ic"><use href="#gear"/></svg><span><span class="la">AutoCAD </span>经典</span><u>▾</u></i><i><svg class="ic"><use href="#unl"/></svg></i>
    </div>
  </footer>

  <div class="taskbar">
    <div class="tsearch">在这里输入你要搜索的内容</div>
    <div class="tasks">
      <div class="task"><svg viewBox="0 0 26 30"><rect x="2" y="4" width="22" height="22" rx="4" fill="#1478e8"/><path d="M6 20l4-7 3 4 3-4 4 7z" fill="#fff"/></svg></div>
      <div class="task"><svg viewBox="0 0 26 30"><circle cx="13" cy="15" r="12" fill="#1584c9"/><path d="M5 16c0-8 14-10 18-3 1 5-9 3-8 0-6 0-6 9 1 10 4 0 6-1 7-2-5 7-18 5-18-5z" fill="#36d0a0"/><path d="M15 13c1 2 8 3 8-1-2-5-10-6-14-2 2-1 5 0 6 3z" fill="#3ec0e0"/></svg></div>
      <div class="task"><svg viewBox="0 0 26 30"><path d="M2 1h22v28H2z" fill="#2b7bc8" stroke="#cfe4f5"/><path d="M6 4h14v8H6z" fill="#e8c45c"/><path d="M14 14l4 10M6 24h14" stroke="#bfe0f8" fill="none"/></svg></div>
      <div class="task"><svg viewBox="0 0 26 30"><ellipse cx="10" cy="12" rx="9" ry="8" fill="#3ec34b"/><path d="M5 18l0 5 5-4z" fill="#3ec34b"/><ellipse cx="18" cy="20" rx="7.500" ry="6.500" fill="#f1f1f1"/><circle cx="7" cy="10" r="1.200" fill="#173"/><circle cx="13" cy="10" r="1.200" fill="#173"/></svg></div>
      <div class="task"><svg viewBox="0 0 26 30"><rect x="1" y="2" width="24" height="26" rx="1" fill="#f05a22"/><path d="M8 9l10 13M18 9L8 22" stroke="#fff" stroke-width="3.600"/><path d="M4 6h4v3H4z" fill="#fff"/></svg></div>
      <div class="task"><svg viewBox="0 0 26 30"><ellipse cx="13" cy="13" rx="8" ry="11" fill="#111"/><ellipse cx="13" cy="18" rx="6" ry="7" fill="#f4f4f4"/><path d="M5 14h16l-3 4H8z" fill="#e11"/><path d="M14 17h5v8h-4z" fill="#e11"/><path d="M5 27h6M15 27h6" stroke="#f5b800" stroke-width="2.500"/></svg></div>
      <div class="task"><svg viewBox="0 0 26 30"><path d="M1 1h24v28H1z" fill="#e8eef4"/><text x="13" y="24" class="ti-n">N</text></svg></div>
      <div class="task"><svg viewBox="0 0 26 30"><path d="M1 1h24v28H1z" fill="#e8eef4"/><text x="13" y="24" class="ti-r">R</text></svg></div>
      <div class="task"><svg viewBox="0 0 26 30"><path d="M2 1h22v28H2z" fill="#2b7bc8" stroke="#cfe4f5"/><path d="M6 4h14v8H6z" fill="#e8c45c"/><path d="M14 14l4 10M6 24h14" stroke="#bfe0f8" fill="none"/></svg></div>
      <div class="task"><svg viewBox="0 0 26 30"><rect x="1" y="2" width="24" height="26" rx="5" fill="#fff"/><circle cx="13" cy="11" r="4" fill="none" stroke="#3b84f0" stroke-width="2.400"/><circle cx="9" cy="18" r="4" fill="none" stroke="#e56" stroke-width="2.400"/><circle cx="17" cy="18" r="4" fill="none" stroke="#3bc" stroke-width="2.400"/></svg></div>
      <div class="task"><svg viewBox="0 0 26 30"><circle cx="13" cy="15" r="12" fill="#f7a11a"/><path d="M13 3a12 12 0 0 1 12 12H13z" fill="#ee4c7b"/><path d="M25 15a12 12 0 0 1-12 12V15z" fill="#4a8cf0"/><path d="M13 27A12 12 0 0 1 1 15h12z" fill="#3cc26a"/><circle cx="13" cy="15" r="5" fill="#fff"/></svg></div>
      <div class="task"><svg viewBox="0 0 26 30"><rect x="1" y="2" width="24" height="26" fill="#2a6fb5"/><text x="13" y="19" class="ti-c">CAD</text></svg></div>
      <div class="task"><svg viewBox="0 0 26 30"><rect x="2" y="3" width="22" height="24" fill="#0d1a53" stroke="#8aa0e8"/><text x="13" y="20" class="ti-p">Ps</text></svg></div>
      <div class="task"><svg viewBox="0 0 26 30"><rect x="1" y="2" width="24" height="26" rx="9" fill="#1587f0"/><path d="M8 21l4-11h7l-1 3h-4l-1 4h4l-1 4z" fill="#fff"/></svg></div>
      <div class="task"><svg viewBox="0 0 26 30"><rect x="4" y="2" width="18" height="26" fill="#7e8a92"/><rect x="6" y="4" width="14" height="5" fill="#3db4e8"/><path d="M6 11h4v4H6zM11 11h4v4h-4zM16 11h4v4h-4zM6 17h4v4H6zM11 17h4v4h-4zM16 17h4v9h-4zM6 22h9v4H6z" fill="#dfe5e8"/></svg></div>
      <div class="task act"><svg viewBox="0 0 26 30"><path d="M3 10h20v18H3z" fill="#f0f0f0"/><path d="M4 19L12 1h3l2 11-4 5-2-4-2 6z" fill="#d8232a"/><path d="M17 14h5v8h-5z" fill="#777"/></svg></div>
      <div class="task"><svg viewBox="0 0 26 30"><path d="M9 4l12-3v24l-14 3z" fill="#8fd2df"/><path d="M9 4L4 20l3 8z" fill="#3a8fa8"/></svg></div>
      <div class="task"><svg viewBox="0 0 26 30"><rect x="1" y="2" width="24" height="26" rx="5" fill="#101010"/><circle cx="6" cy="10" r="2.500" fill="none" stroke="#e33" stroke-width="1.600"/><circle cx="6" cy="18" r="2.500" fill="none" stroke="#e33" stroke-width="1.600"/><circle cx="14" cy="14" r="3.500" fill="none" stroke="#ddd" stroke-width="1.600"/><path d="M24 8l-5 6 5 6" fill="none" stroke="#3ac" stroke-width="1.600"/></svg></div>
      <div class="task"><svg viewBox="0 0 26 30"><path d="M3 4h20v24H3z" fill="#f8c93e"/><path d="M3 4h20v6H3z" fill="#fbe07d"/><path d="M9 18h8v10H9z" fill="#2b7fc4"/></svg></div>
      <div class="task"><svg viewBox="0 0 26 30"><rect x="1" y="2" width="24" height="26" rx="10" fill="#1a84f0"/><circle cx="13" cy="15" r="8" fill="none" stroke="#fff" stroke-width="1.500"/><path d="M10 10v10M16 10l-6 5 6 5" fill="none" stroke="#fff" stroke-width="2"/></svg></div>
      <div class="task"><svg viewBox="0 0 26 30"><rect x="1" y="1" width="24" height="28" rx="3" fill="#9fd6ee"/><circle cx="13" cy="12" r="6" fill="#f4dcd0"/><path d="M6 12c-1-10 15-10 14 0l1 12-5-6H9l-4 6z" fill="#3db6d8"/><path d="M8 26h10v3H8z" fill="#fff"/></svg></div>
    </div>
    <div class="tray">
      <span class="caret">^</span>
      <svg class="tic" viewBox="0 0 16 22"><rect x="1" y="1" width="14" height="20" rx="2" fill="#9fd6ee"/><circle cx="8" cy="9" r="4" fill="#3db6d8"/></svg>
      <svg class="tic" viewBox="0 0 16 22"><rect x="5" y="1" width="6" height="14" rx="3" fill="#ddd"/><path d="M3 11c0 7 10 7 10 0M8 16v5" fill="none" stroke="#ddd" stroke-width="1.500"/></svg>
      <svg class="tic" viewBox="0 0 16 22"><ellipse cx="8" cy="9" rx="5" ry="7" fill="#111"/><ellipse cx="8" cy="12" rx="3.500" ry="4.500" fill="#eee"/><path d="M3 10h10v3H3z" fill="#e11"/><path d="M3 19h4M9 19h4" stroke="#ea0" stroke-width="2"/></svg>
      <svg class="tic" viewBox="0 0 16 22"><ellipse cx="7" cy="9" rx="6" ry="5" fill="#3ec34b"/><ellipse cx="11" cy="14" rx="4.500" ry="4" fill="#eee"/></svg>
      <svg class="tic" viewBox="0 0 16 22"><path d="M1 9h3l3-3v10l-3-3H1z" fill="#aaa"/><path d="M9 8c2 2 2 4 0 6M11 6c3 3 3 7 0 10" fill="none" stroke="#aaa"/></svg>
      <span class="ime">A</span>
      <div class="clock"><span>20:</span><span>2021</span></div>
    </div>
  </div>
</div>
</body>
</html>
```
FILE: styles.css
```css
* { box-sizing: border-box; }
html, body { margin: 0; padding: 0; background: #000; }
body { width: 1731px; height: 1080px; overflow: hidden; font-family: "Noto Sans CJK SC", "Liberation Sans", sans-serif; }
.defs { position: absolute; }
.svg-tiny { font: 5px "Liberation Sans", sans-serif; text-anchor: middle; fill: #333; }
.app { width: 1731px; height: 1080px; display: flex; flex-direction: column; overflow: hidden; filter: blur(0.45px); }
.ic { width: 16px; height: 16px; flex: none; }
i { font-style: normal; }
.la { font-family: "Liberation Mono", monospace; font-size: 11.5px; letter-spacing: -0.9px; }

/* title bar */
.titlebar { height: 24px; flex: none; display: flex; align-items: stretch; background: #fff; border-bottom: 1px solid #aaa; }
.qat { width: 120px; flex: none; background: #6e6e6e; display: flex; align-items: center; gap: 7px; padding-left: 0; }
.qat .ic { width: 15px; height: 15px; }
.dot { font-size: 9px; color: #bbb; margin-left: -3px; }
.dot.dark { color: #222; margin-left: -2px; }
.dot.g { color: #999; margin: 0 6px 0 -1px; }
.apptitle { margin-left: 432px; width: 781px; display: flex; align-items: center; gap: 23px; font-size: 12.5px; color: #333; line-height: 1; }
.search { width: 327px; flex: none; background: #626262; display: flex; align-items: center; gap: 6px; padding-left: 3px; }
.tri { font-size: 10px; color: #111; }
.searchbox { width: 179px; height: 21px; background: #f4f4f4; color: #888; font-size: 11px; font-style: italic; line-height: 21px; padding-left: 4px; margin-right: 2px; }
.minbtn { flex: 1; color: #888; font-size: 12px; text-align: center; line-height: 22px; padding-left: 24px; }

/* menu */
.menubar { height: 21px; flex: none; background: linear-gradient(#8b8b8b, #5f5f5f); display: flex; align-items: center; gap: 23px; padding-left: 21px; font-size: 11.5px; color: #c8c8c8; line-height: 1; }
.menubar span { width: 40px; white-space: nowrap; }

/* toolbars */
.toolzone { height: 55px; flex: none; background: linear-gradient(#5f5f5f, #6a6a6a); display: flex; flex-direction: column; gap: 4px; border-bottom: 2px solid #999; }
.toolrow { height: 23px; display: flex; flex: none; }
.toolrow.two { height: 25px; }
.tb { display: flex; align-items: center; background: #f1f1f1; height: 100%; flex: none; overflow: hidden; }
.tb .ic { margin: 0 3.6px; }
.sep { width: 1px; height: 18px; background: #999; flex: none; margin: 0 2px; }
.sep.wide { margin: 0 10px 0 2px; }
.tb-a { width: 577px; }
.tb-a > .ic:first-child { margin-left: -9px; }
.tb-b { width: 590px; margin-left: 6px; background: #e8e8e8; }
.tb-c { width: 221px; margin-left: 9px; padding-left: 1px; }
.tb-d { width: 133px; }
.tb-d .ic { margin: 0 4px; }
.tb-e { width: 390px; margin-left: 11px; }
.tb-e .ic { margin: 0 3.5px; }
.tb-f { width: 147px; margin-left: 13px; }
.tb-g { width: 416px; margin-left: 8px; gap: 6px; }
.tb-h { width: 264px; margin-left: 11px; }
.tb-h .ic { margin: 0 3.6px; }
.tb-h .sep { margin: 0 3px; }
.dd { height: 100%; flex: none; background: #cacaca; display: flex; align-items: center; position: relative; color: #777; font-size: 13px; }
.dd em { position: absolute; right: 4px; top: 3px; font-size: 10px; font-style: normal; color: #aaa; }
.w88 { width: 88px; } .w120 { width: 120px; } .w119 { width: 119px; } .w121 { width: 121px; } .w122 { width: 122px; } .w124 { width: 124px; }
.w147 { width: 147px; } .w163 { width: 163px; } .w297 { width: 297px; }
.ml { margin-left: 8px !important; }
.sans, .sansl, .sansr { font-family: Roboto, sans-serif; letter-spacing: .3px; }
.sans { justify-content: center; padding-right: 10px; }
.sansl { padding-left: 5px; }
.sansr { padding-left: 25px; }
.blank { width: 99px; background: #f1f1f1; }
.blank::before { content: ""; width: 80px; height: 20px; background: #e9e9e9; }
.layerdd { padding-left: 0; }
.layerdd .ic.s { margin: 0 .2px; width: 16px; height: 16px; }
.wall { font: 13px Roboto, sans-serif; color: #888; margin-left: 1px; }
.bluesq { width: 11px; height: 11px; background: #0000d0; margin: 0 3px 0 6px; flex: none; }
.ln { width: 58px; height: 2px; background: #888; margin: 0 5px 0 6px; flex: none; }
.ln.short { width: 35px; margin-right: 1px; }
.serif { font: 11px "Liberation Serif", serif; color: #777; }
.by { margin-left: 7px; }

/* canvas */
.canvas { height: 809px; flex: none; position: relative; background: #000; overflow: hidden; }
.drawing { position: absolute; inset: 0; width: 1731px; height: 809px; fill: none; stroke-linecap: butt; }
.drawing text { stroke: none; }
.gy { stroke: #7a8a7a; stroke-width: 1; }
.gy2 { stroke: #8a8a8a; stroke-width: 1.2; }
.cy { stroke: #45c4c8; stroke-width: 1; }
.cyd { stroke: #3fa7a8; stroke-width: 1.2; }
.cyt { stroke: #19e0ea; stroke-width: 2.5; }
.cyt2 { stroke: #2fc6cc; stroke-width: 2.5; }
.cyw { stroke: #18e2ee; stroke-width: 3; }
.cg { stroke: #3fb8a8; stroke-width: 1.2; }
.gn { stroke: #2fc02f; stroke-width: 1.2; }
.rd { stroke: #b04a4a; stroke-width: 1.2; }
.rd2 { stroke: #8a1a1a; stroke-width: 1.6; }
.wh { stroke: #d6d6d6; stroke-width: 1; }
.wt { stroke: #c8c8c8; stroke-width: 1; }
.or { stroke: #b98a60; stroke-width: 1.4; }
.brown { stroke: #96705c; stroke-width: 3; }
.brownd { stroke: #96705c; stroke-width: 2.5; stroke-dasharray: 28 36; }
.yb { stroke: #f2f02a; stroke-width: 3.5; }
.yl { stroke: #d4c84a; stroke-width: 1; }
.mg { stroke: #c98bd0; stroke-width: 2; }
.mgw { stroke: #a01fa8; stroke-width: 2; }
.arc { stroke: #4aa6aa; stroke-width: 1; }
.col { fill: #0808c8; stroke: #b9b9d9; stroke-width: .8; }
.cir { stroke: #1f8f1f; stroke-width: 1.4; fill: #111; }
.blob { fill: #ddd; }
.tx7 text { font: 7px "Liberation Sans", sans-serif; fill: #aab; }
.tx7w text { font: bold 7px "Liberation Sans", sans-serif; fill: #eee; }
.tx8 text { font: 9px "Liberation Sans", sans-serif; fill: #ddd; }
.room text { font: 7px "Noto Sans CJK SC", sans-serif; fill: #aaa; }
.pur text { font: 10px "Noto Sans CJK SC", sans-serif; fill: #3a1a9a; }
.purl { stroke: #3a1a9a; stroke-width: 1; }
.note { font: 14px "Noto Sans CJK SC", "DejaVu Sans", sans-serif; fill: #d0d0d0; }
.note.dim { fill: #bbb; font-size: 14.3px; }
.head { font: 31.5px "Noto Sans CJK SC", sans-serif; fill: #eee; }
.greenbar { stroke: #22e022; stroke-width: 4; }
.thin { stroke: #6a7a5a; stroke-width: 1; }
.ucs { stroke: #a8a8a8; stroke-width: 1; }
.caption { font: 700 75px "Noto Sans CJK SC", "Liberation Sans", sans-serif; fill: #fff; }
.cap-l { font: 700 85px "Liberation Sans", sans-serif; }

/* dialog */
.dialog { position: absolute; left: 531px; top: 126px; width: 636px; height: 666px; background: #f0f0f0; color: #333; font-size: 12px; line-height: 16px; display: flex; flex-direction: column; border: 1px solid #777; border-top: 0; }
.dlg-title { height: 26px; flex: none; background: #fff; display: flex; align-items: center; padding-left: 3px; position: relative; color: #555; }
.dlg-icon { width: 18px; height: 18px; margin-right: 4px; }
.dlg-x { width: 11px; height: 11px; position: absolute; right: 9px; top: 7px; stroke: #444; stroke-width: 1.1; fill: none; }
.dlg-info { height: 25px; flex: none; display: flex; align-items: center; position: relative; padding-left: 10px; padding-bottom: 1px; }
.inf-a { width: 107px; }
.inf-b { width: 196px; color: #444; }
.inf-ic { width: 17px; height: 17px; margin-right: 6px; }
.inf-c { width: 111px; }
.tabs { height: 18px; flex: none; display: flex; padding-left: 14px; position: relative; z-index: 1; margin-top: 1px; }
.tab { height: 18px; background: #f0f0f0; border: 1px solid #e3e3e3; border-bottom: 0; text-align: left; padding-left: 4px; line-height: 17px; flex: none; overflow: hidden; white-space: nowrap; }
.w45 { width: 46px; padding-left: 9px; } .w47 { width: 48px; } .w69 { width: 70px; } .w80 { width: 81px; } .w48 { width: 48px; } .w58 { width: 57px; } .w49 { width: 50px; } .w8 { width: 9px; padding-left: 1px; color: #555; }
.tab.sel { width: 49px; height: 20px; margin-top: -2px; background: #fff; padding: 2px 2px 0; text-align: left; position: relative; }
.focus { display: block; border: 1px dotted #333; height: 16px; line-height: 13px; padding-left: 2px; }
.scr { width: 14px; height: 15px; border: 1px solid #ddd; background: #f8f8f8; color: #222; text-align: center; font-size: 9px; line-height: 13px; margin-right: 1px; }
.panel { height: 558px; flex: none; margin: 0 14px 0 12px; width: 608px; background: #fff; border: 1px solid #dedede; padding: 16px 16px 0 10px; display: grid; grid-template-columns: 284px 284px; column-gap: 12px; align-content: start; }
.col-l, .col-r { display: flex; flex-direction: column; gap: 15px; }
.col-r { gap: 16px; }
.grp { border: 1px solid #e0e0e0; position: relative; }
.lg { position: absolute; left: 4px; top: -8px; background: #fff; padding: 0 4px; color: #444; white-space: nowrap; }
.h42 { height: 43px; padding-top: 12px; padding-left: 12px; }
.h101 { height: 101px; } .h80 { height: 80px; } .h66 { height: 68px; } .h158 { height: 158px; padding-top: 12px; padding-left: 22px; } .h79 { height: 79px; }
.wbtn { display: block; height: 19px; background: #e1e1e1; border: 0; border-bottom: 1px solid #bbb; border-right: 1px solid #ccc; color: #333; font: inherit; font-size: 12px; line-height: 16px; padding: 0; }
.w262 { width: 262px; } .w208 { width: 208px; }
.select { width: 236px; height: 20px; background: #e3e3e3; border: 1px solid #d5d5d5; margin: 13px 0 0 23px; padding-left: 3px; line-height: 15px; position: relative; }
.chev { position: absolute; right: 4px; top: 6px; width: 10px; height: 6px; stroke: #666; fill: none; }
.lbl { margin: 6px 0 0 23px; }
.opt { display: flex; align-items: center; height: 18px; padding-left: 47px; white-space: nowrap; color: #222; }
.h101 .opt { position: relative; top: 3px; }
.h80 .opt { height: 22px; }
.h80 .opt:first-of-type { margin-top: 5px; }
.opt.off { color: #999; }
.radio { width: 13px; height: 13px; border-radius: 50%; border: 1px solid #333; background: #fff; margin-right: 3px; position: relative; flex: none; }
.radio.on::after { content: ""; position: absolute; inset: 2.5px; background: #222; border-radius: 50%; }
.opt.off .radio { border-color: #ccc; }
.opt.off .radio.on::after { background: #aaa; }
.chk { display: flex; align-items: center; height: 18px; white-space: nowrap; color: #222; position: relative; }
.chks { margin-top: 3px; margin-left: 14px; }
.box { width: 13px; height: 13px; border: 1px solid #444; background: #fff; margin-right: 3px; flex: none; position: relative; }
.box.on::after { content: ""; position: absolute; left: 3px; top: 0; width: 5px; height: 9px; border: solid #333; border-width: 0 1.2px 1.2px 0; transform: rotate(40deg); }
.box.off { border-color: #999; }
.h66 .chk { margin-left: 34px; }
.h66 .chk:first-of-type { margin-top: 12px; }
.h66 .chk + .chk { margin-top: 1px; }
.flag { width: 17px; height: 17px; position: absolute; left: -24px; top: 1px; }
.live { margin: 14px 0 0 6px; }
.retry { display: flex; align-items: center; margin: 3px 0 0 6px; color: #222; white-space: nowrap; }
.num { width: 37px; height: 20px; border: 1px solid #ddd; color: #999; padding-left: 4px; margin-right: 4px; line-height: 18px; }
.dlg-foot { flex: 1; display: flex; gap: 8px; padding: 12px 14px 0 305px; }
.fbtn { width: 73px; height: 20px; background: #e1e1e1; border: 1px solid #d0d0d0; color: #222; font: inherit; font-size: 12px; line-height: 16px; padding: 0; }
.fbtn.def { border: 2px solid #2e86c8; background: #e8e8e8; }
.fbtn.dis { background: #ccc; color: #888; border-color: #ccc; }
.cursor { position: absolute; left: 800px; top: 188px; width: 13px; height: 20px; fill: #fff; stroke: #222; stroke-width: 1; }

/* layout bar */
.layoutbar { height: 16px; flex: none; background: #f0f0f0; border-bottom: 1px solid #aaa; display: flex; position: relative; }
.ltab { width: 47px; height: 15px; margin-left: 6px; border-left: 1px solid #444; border-right: 1px solid #777; padding-left: 6px; font-size: 12px; line-height: 15px; color: #333; transform: skewX(-12deg); }
.hscroll { margin-left: 1084px; flex: 1; display: flex; align-items: center; border-left: 6px solid #bbb; background: #f2f2f2; position: relative; }
.arr { font-size: 10px; color: #333; margin-left: 4px; }
.thumb { position: absolute; left: 462px; top: 1px; width: 17px; height: 14px; background: #d2d2d2; }

/* band */
.band { height: 35px; flex: none; background: #666; padding-top: 5px; }
.tianzheng { width: 493px; height: 22px; background: #eee; display: flex; align-items: center; box-shadow: 0 1px 0 #999; }
.tianzheng .ic { margin: 0 3.6px; }
.tianzheng .ic:first-child { margin-left: 8px; }

/* command */
.command { height: 58px; flex: none; background: #fff; border-bottom: 2px solid #444; }
.cmdline { height: 39px; padding: 0 0 0 8px; border-bottom: 1px solid #aaa; line-height: 14px; color: #444; display: flex; align-items: baseline; }
.m { font: 13.33px/14px "Liberation Mono", monospace; }
.cj { font-size: 16px; line-height: 14px; }
.cmdinput { height: 17px; }

/* status */
.status { height: 22px; flex: none; background: linear-gradient(#5a5a5a, #8a8a8a); display: flex; align-items: center; position: relative; }
.coord { font: 10px "Liberation Mono", monospace; color: #8f8f8f; width: 244px; white-space: nowrap; overflow: hidden; letter-spacing: -.05px; }
.sbtns { display: flex; height: 22px; gap: 0; flex: none; }
.sbtns i { width: 22px; height: 22px; background: #c9c9c9; border-right: 1px solid #777; display: flex; align-items: center; justify-content: center; font-size: 11px; color: #333; white-space: nowrap; }
.sbtns i.on { background: #a9d2e4; }
.sbtns .ic { width: 15px; height: 15px; }
.sbtns u { text-decoration: none; color: #222; font-size: 10px; margin-left: 2px; }
.sbtns .la { font-size: 11px; letter-spacing: -.6px; }
.b2 { margin-left: 863px; } .b3 { margin-left: 19px; } .b4 { margin-left: 21px; } .b5 { margin-left: 8px; }
.sbtns i.wide { width: 52px; }
.sbtns i.wider { width: 106px; }

/* taskbar */
.taskbar { flex: 1; background: #1e2e37; display: flex; overflow: hidden; }
.tsearch { width: 296px; flex: none; background: #3a3a3a; color: #cfcfcf; font-size: 13.4px; line-height: 42px; text-indent: -6px; white-space: nowrap; overflow: hidden; }
.tasks { display: flex; margin-left: 2px; }
.task { width: 49px; flex: none; position: relative; display: flex; align-items: center; justify-content: center; padding-bottom: 3px; }
.task svg { width: 24px; height: 28px; }
.task::after { content: ""; position: absolute; left: 5px; right: 5px; bottom: 0; height: 3px; background: transparent; }
.task:nth-child(5)::after, .task:nth-child(8)::after, .task:nth-child(11)::after, .task:nth-child(12)::after, .task:nth-child(13)::after, .task:nth-child(16)::after, .task:nth-child(17)::after, .task:nth-child(18)::after, .task:nth-child(19)::after, .task:nth-child(20)::after, .task:nth-child(21)::after { background: #6fb4e8; }
.task.act { background: #3e515c; }
.task.act::after { left: 0; right: 0; }
.ti-n, .ti-r { font: 700 24px "Liberation Sans", sans-serif; text-anchor: middle; fill: #3b6aa0; }
.ti-c { font: 700 9px "Liberation Sans", sans-serif; text-anchor: middle; fill: #cfe8ff; }
.ti-p { font: 700 12px "Liberation Sans", sans-serif; text-anchor: middle; fill: #8fb8ff; }
.tray { flex: 1; display: flex; align-items: center; padding-left: 217px; gap: 7px; position: relative; }
.caret { color: #ddd; font-size: 16px; margin-right: 5px; }
.tic { width: 15px; height: 22px; flex: none; }
.ime { color: #ddd; font: 20px "Liberation Sans", sans-serif; margin-left: 4px; }
.clock { position: absolute; left: 378px; top: 0; width: 30px; height: 40px; color: #ddd; font-size: 13.5px; line-height: 20px; white-space: nowrap; }
.clock span { display: block; }
.clock span:first-child { padding-left: 18px; }
```
